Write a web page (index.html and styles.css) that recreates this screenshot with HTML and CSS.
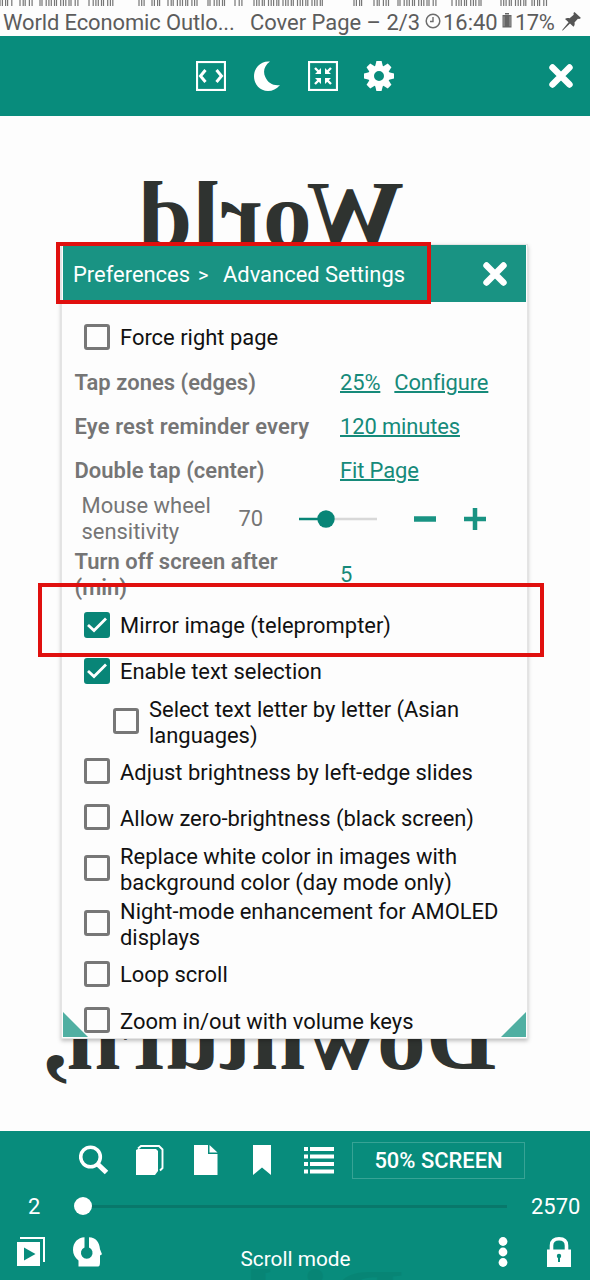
FILE: index.html
```html
<!DOCTYPE html>
<html lang="en">
<head>
<meta charset="utf-8">
<title>Advanced Settings</title>
<link rel="stylesheet" href="styles.css">
</head>
<body>
<div class="screen">
  <div class="scanline"><svg width="590" height="6" id="ticks"></svg></div>
  <header class="status">
    <span class="book">World Economic Outlo...</span>
    <span class="cover">Cover Page – 2/3</span>
    <svg class="clock" width="16" height="16" viewBox="0 0 16 16"><circle cx="8" cy="8" r="6.800" fill="none" stroke="#6c6c6c" stroke-width="1.500"/><path d="M8 4v4.500H5" fill="none" stroke="#6c6c6c" stroke-width="1.400"/></svg>
    <span class="time">16:40</span>
    <svg class="battery" width="10" height="15" viewBox="0 0 10 15"><path d="M3 0h4v1.500H3zM.5 2h9v12.500h-9z" fill="#666"/><path d="M2 3.300v10M8 3.300v10" stroke="#bbb" stroke-width=".7"/></svg>
    <span class="pct">17%</span>
    <svg class="pin" width="19" height="19" viewBox="0 0 19 19"><path d="M12.500 0 19 6l-1.800 1-1.300-.2-3.400 3.800c.4 1.800.2 3-1 4.200L8 11.500 .8 18.500 0 18.200 6.600 10.200 3 7c1.300-1.200 3-1.400 4.600-.7l4.100-3.600-.2-1.600z" fill="#555"/></svg>
  </header>

  <nav class="topbar">
    <div class="tools">
      <svg width="30" height="30" viewBox="0 0 30 30" fill="none" stroke="#fff"><rect x="1" y="1" width="28" height="28" stroke-width="2.200"/><path d="M9.500 9 4.500 15l5 6M20.500 9l5 6-5 6" stroke-width="3"/></svg>
      <svg width="26" height="30" viewBox="0 0 26 30" fill="#fff"><path d="M16 .5C10 5 8.800 10.500 11.300 16c2.600 6 8 9 14.700 8C22.500 28 18.500 30 14 30 6 30 0 23.500 0 15.300 0 7 6.500-.5 16 .5z"/></svg>
      <svg width="30" height="30" viewBox="0 0 30 30" fill="none" stroke="#fff"><rect x="1" y="1" width="28" height="28" stroke-width="2.200"/><path d="M7 7l5 5M23 7l-5 5M7 23l5-5M23 23l-5-5" stroke-width="2.400"/><path d="M13 7v6H7zM17 7v6h6zM13 23v-6H7zM17 23v-6h6z" fill="#fff" stroke="none"/></svg>
      <svg width="30" height="30" viewBox="-15 -15 30 30"><g fill="#fff"><path id="tooth" d="M-3.800-10l1.200-5h5.200l1.200 5z"/><use href="#tooth" transform="rotate(45)"/><use href="#tooth" transform="rotate(90)"/><use href="#tooth" transform="rotate(135)"/><use href="#tooth" transform="rotate(180)"/><use href="#tooth" transform="rotate(225)"/><use href="#tooth" transform="rotate(270)"/><use href="#tooth" transform="rotate(315)"/></g><circle r="7.900" fill="none" stroke="#fff" stroke-width="5.800"/></svg>
    </div>
    <svg class="close" width="24" height="24" viewBox="0 0 24 24"><path d="M3.500 3.500l17 17M20.500 3.500l-17 17" stroke="#fff" stroke-width="6.400" stroke-linecap="round"/></svg>
  </nav>

  <main class="page">
    <div class="title first"><span>World</span></div>
    <div class="title second"><span>Downturn,</span></div>

    <section class="dialog">
      <header class="dialog-head">
        <span class="crumb">Preferences</span><span class="arrow">&gt;</span><span class="crumb-here">Advanced Settings</span>
        <svg class="close" width="24" height="24" viewBox="0 0 24 24"><path d="M3.500 3.500l17 17M20.500 3.500l-17 17" stroke="#fff" stroke-width="6.400" stroke-linecap="round"/></svg>
      </header>
      <div class="check r1"><i class="box"></i><span>Force right page</span></div>
      <div class="pref"><b>Tap zones (edges)</b><a>25%</a><a class="next">Configure</a></div>
      <div class="pref"><b class="wide">Eye rest reminder every</b><a>120 minutes</a></div>
      <div class="pref"><b>Double tap (center)</b><a>Fit Page</a></div>
      <div class="wheel">
        <span class="name">Mouse wheel<br>sensitivity</span><span class="num">70</span>
        <svg width="80" height="20" viewBox="0 0 80 20"><path d="M27 10h52" stroke="#d8d8d8" stroke-width="2.500"/><path d="M1 10h27" stroke="#088577" stroke-width="2.500"/><circle cx="28" cy="10" r="8.700" fill="#088577"/></svg>
        <svg class="minus" width="22" height="22" viewBox="0 0 22 22"><path d="M0 11h22" stroke="#199383" stroke-width="5.500"/></svg>
        <svg class="plus" width="22" height="22" viewBox="0 0 22 22"><path d="M0 11h22M11 0v22" stroke="#199383" stroke-width="4.500"/></svg>
      </div>
      <div class="off"><b>Turn off screen after<br>(min)</b><span class="five">5</span></div>
      <div class="check r2"><i class="box on"><svg width="20" height="16" viewBox="0 0 20 16"><path d="M1 8l6 5.500L19 1.500" fill="none" stroke="#fff" stroke-width="2.800"/></svg></i><span>Mirror image (teleprompter)</span></div>
      <div class="check r3"><i class="box on"><svg width="20" height="16" viewBox="0 0 20 16"><path d="M1 8l6 5.500L19 1.500" fill="none" stroke="#fff" stroke-width="2.800"/></svg></i><span>Enable text selection</span></div>
      <div class="check two sub"><i class="box"></i><span>Select text letter by letter (Asian<br>languages)</span></div>
      <div class="check low"><i class="box"></i><span>Adjust brightness by left-edge slides</span></div>
      <div class="check low"><i class="box"></i><span>Allow zero-brightness (black screen)</span></div>
      <div class="check two"><i class="box"></i><span>Replace white color in images with<br>background color (day mode only)</span></div>
      <div class="check two"><i class="box"></i><span>Night-mode enhancement for AMOLED<br>displays</span></div>
      <div class="check r6"><i class="box"></i><span>Loop scroll</span></div>
      <div class="check low"><i class="box"></i><span>Zoom in/out with volume keys</span></div>
      <i class="grip left"></i><i class="grip right"></i>
    </section>
    <div class="mark mark-head"></div>
    <div class="mark mark-mirror"></div>
  </main>

  <footer class="bottombar">
    <div class="ghost"><span>Did</span></div>
    <div class="actions">
      <svg width="30" height="30" viewBox="0 0 30 30" fill="none" stroke="#fff"><circle cx="11.500" cy="12" r="9.800" stroke-width="3.600"/><path d="M18.500 19l9 8.500" stroke-width="5"/></svg>
      <svg width="28" height="30" viewBox="0 0 28 30"><path d="M0 5l2-1h18l2 2v20l-3 4H0z" fill="#fff"/><path d="M2 3.500 5 1h18l3.500 3.500V23l-2.500 2.500" fill="none" stroke="#fff" stroke-width="1.900"/></svg>
      <svg width="24" height="30" viewBox="0 0 24 30" fill="#fff"><path d="M0 0h14v9h9.500v21H0z"/><path d="M15.500 0l8 7.500h-8z"/></svg>
      <svg width="18" height="30" viewBox="0 0 18 30"><path d="M0 0h18v30l-9-7.500L0 30z" fill="#fff"/></svg>
      <svg width="30" height="28" viewBox="0 0 30 28"><path d="M0 3h4M0 10.500h4M0 18h4M0 25.500h4M6 3h24M6 10.500h24M6 18h24M6 25.500h24" stroke="#fff" stroke-width="4"/></svg>
      <div class="screen-btn"><span>50% SCREEN</span></div>
    </div>
    <div class="seek"><span class="from">2</span><div class="track"><i class="knob"></i></div><span class="to">2570</span></div>
    <div class="modes">
      <svg width="28" height="29" viewBox="0 0 28 29"><path d="M0 5h23v24H0z" fill="#fff"/><path d="M3 1h24v24" fill="none" stroke="#fff" stroke-width="2"/><path d="M7 10.500v13L18.500 17z" fill="#088c7c"/></svg>
      <svg class="head" width="30" height="30" viewBox="0 0 30 30"><path d="M11.500 .3v10.200a5.800 5.800 0 1 0 4.500 0V.3c7 0 10.500 5 11 12l2 5-2 1.200V25c0 3-.5 4.500-2 4.500H5.500v-6C2 20.500 0 17 0 13 0 5.500 5 .5 11.500 .3z" fill="#fff"/></svg>
      <span class="mode">Scroll mode</span>
      <svg class="dots" width="10" height="30" viewBox="0 0 10 30" fill="#fff"><circle cx="5" cy="4.500" r="4.400"/><circle cx="5" cy="15" r="4.400"/><circle cx="5" cy="25.500" r="4.400"/></svg>
      <svg class="lock" width="24" height="30" viewBox="0 0 24 30"><path d="M4.500 14V8.500C4.500 4 7.500 1.800 12 1.800s7.500 2.200 7.500 6.700V14" fill="none" stroke="#fff" stroke-width="3.600"/><path d="M0 12.500h24V30H0z" fill="#fff"/><circle cx="12" cy="19" r="2.200" fill="#088c7c"/><path d="M11 19h2v6h-2z" fill="#088c7c"/></svg>
    </div>
  </footer>
</div>
<script src="ticks.js"></script>
</body>
</html>
```
FILE: ticks.js
```js
// Row of clipped scan marks along the top edge: [start, end] of each cluster.
const clusters = [[0,13],[20,33],[40,80],[89,114],[139,146],[152,162],[168,197],[208,227],[235,244],[254,325],[354,362],[374,391],[398,437],[452,481],[501,528],[532,547]];
const svg = document.getElementById('ticks');
let d = '';
clusters.forEach(([a, b], n) => {
  for (let x = a, k = n; x < b; k++) {
    d += `M${x} 0v6`;
    x += [2.4, 3.2, 2, 4.2, 2.7][k % 5];
  }
});
svg.innerHTML = `<path d="${d}" stroke="#777" stroke-width="1.2"/>`;
```
FILE: styles.css
```css
* { box-sizing: border-box; }
body { margin: 0; background: #fdfdfd; font-family: Roboto, sans-serif; font-size: 21.930px; color: #111; }
svg { display: block; flex: none; }
span, b, a { white-space: nowrap; }
.screen { width: 590px; height: 1280px; display: flex; flex-direction: column; overflow: hidden; }
.scanline { height: 6px; }
.status { height: 30px; display: flex; align-items: center; color: #5c5c5c; padding: 2px 0 0 3px; }
.book { width: 247px; letter-spacing: -.1px; }
.cover { width: 175px; }
.time { width: 59px; margin-left: 2px; }
.clock { margin-top: -3px; }
.battery { margin-top: -3px; }
.pct { width: 47px; margin-left: 3px; letter-spacing: -.5px; }
.pin { margin-top: -2px; }
.topbar { height: 80px; flex: none; background: #088c7c; display: flex; align-items: center; padding: 0 17px 0 196px; justify-content: space-between; }
.tools { display: flex; align-items: center; gap: 27px; }
.tools svg:nth-child(2) { margin: 0 1px; }
.tools svg:nth-child(4) { margin-left: -1px; }
.page { height: 1015px; flex: none; position: relative; }
.title { position: absolute; font: bold 96px/96px "Liberation Serif", serif; color: #2f3330; transform-origin: right; transform: translateX(-100%) scaleX(-1.018); }
.first { right: 191px; top: 51px; }
.second { right: 102px; top: 873px; }
.dialog { position: absolute; left: 61px; top: 128px; width: 467px; height: 795px; background: #fdfdfd; border: 1px solid #e4e4e4; box-shadow: 0 2px 4px rgba(0,0,0,.25); overflow: hidden; }
.dialog-head { height: 57px; margin: 0 1px; background: #199383; color: #fff; display: flex; align-items: center; padding: 0 19px 0 10px; }
.dialog-head span { padding-top: 2px; }
.crumb { width: 125px; }
.arrow { width: 25px; font-size: 20px; }
.crumb-here { flex: 1; }
.check { display: flex; align-items: center; height: 46px; padding-left: 22px; line-height: 26px; }
.check span { padding-top: 2px; }
.box { width: 26px; height: 26px; flex: none; border: 3px solid #777; border-radius: 3px; margin-right: 10px; display: flex; align-items: center; justify-content: center; }
.box.on { background: #088577; border-color: #088577; }
.r1 { height: 59px; padding-top: 10px; }
.two { height: 55px; }
.check.two span, .check.low span { padding-top: 4px; }
.sub { padding-left: 51px; height: 54px; }
.r6 { height: 47px; }
.pref, .off { display: flex; align-items: center; height: 43.700px; padding-left: 12.500px; color: #757575; }
.pref b, .off b { width: 265.500px; font-weight: 600; letter-spacing: .05px; }
.pref .wide { letter-spacing: .17px; }
.pref a, .five { color: #168a7a; }
.pref a { text-decoration: underline; text-decoration-thickness: 1.500px; letter-spacing: -.12px; }
.next { margin-left: 14px; }
.wheel { display: flex; align-items: center; height: 54px; padding: 0 0 1px 19.500px; color: #757575; line-height: 26px; }
.name { width: 157px; padding-top: 1px; }
.num { width: 59.500px; }
.minus { margin-left: 36px; }
.plus { margin-left: 28px; }
.off { height: 56px; line-height: 26px; padding-top: 2px; }
.grip { position: absolute; bottom: 1px; width: 25px; height: 25px; background: #50afa2; }
.left { left: 1px; clip-path: polygon(0 0, 100% 100%, 0 100%); }
.right { right: 1px; clip-path: polygon(100% 0, 100% 100%, 0 100%); }
.mark { position: absolute; border: 4px solid #e0100e; }
.mark-head { left: 56px; top: 126px; width: 375px; height: 62px; }
.mark-mirror { left: 38px; top: 467px; width: 506px; height: 74px; }
.bottombar { height: 149px; flex: none; background: #088c7c; color: #fff; position: relative; overflow: hidden; }
.actions { display: flex; align-items: center; height: 58px; padding-left: 79px; }
.actions svg:nth-child(2) { margin-left: 27px; }
.actions svg:nth-child(3) { margin-left: 30px; }
.actions svg:nth-child(4) { margin-left: 35px; }
.actions svg:nth-child(5) { margin-left: 33px; }
.screen-btn { margin-left: 18px; width: 173px; height: 37px; border: 1px solid #37a395; display: flex; align-items: center; justify-content: center; font-weight: 500; }
.seek { display: flex; align-items: center; height: 34px; padding-left: 28px; }
.from { width: 55px; }
.track { width: 424px; height: 3px; background: #08786b; display: flex; align-items: center; }
.knob { width: 18px; height: 18px; border-radius: 50%; background: #fff; margin-left: -9px; }
.to { margin-left: 24px; }
.modes { display: flex; align-items: center; height: 57px; padding: 0 0 0 17px; }
.head { margin-left: 28px; }
.mode { margin: 15px 0 0 137.500px; width: 257.500px; font-size: 20.800px; }
.lock { margin-left: 39px; }
.ghost { position: absolute; right: 196px; top: 124px; font: bold 96px/96px "Liberation Serif", serif; color: #07806f; opacity: .5; transform-origin: right; transform: translateX(-100%) scaleX(-1.060); }
```
